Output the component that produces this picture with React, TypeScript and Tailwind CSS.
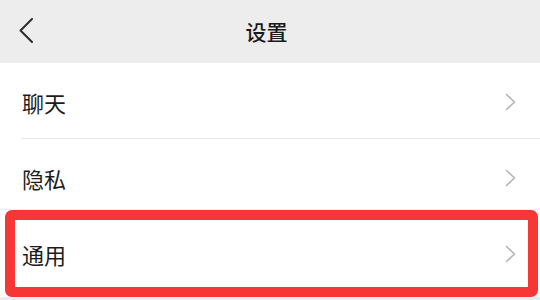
import React from "react";

const Chevron = () => (
  <svg width="11" height="18" viewBox="0 0 11 18" fill="none">
    <polyline points="1.5,1.5 9.5,9 1.5,16.5" stroke="#b5b5b5" strokeWidth="1.6" strokeLinecap="round" strokeLinejoin="round" />
  </svg>
);

const Row = ({ label, h }: { label: string; h: string }) => (
  <div className={`flex items-center justify-between pl-[22px] pr-[24px] bg-white ${h}`}>
    <span className="text-[22px] leading-none text-[#1c1c1c]">{label}</span>
    <Chevron />
  </div>
);

export default function App() {
  return (
    <div
      className="relative w-[540px] h-[300px] overflow-hidden bg-[#ededed]"
      style={{ fontFamily: '"Noto Sans CJK SC", "Noto Sans", sans-serif' }}
    >
      <div className="relative flex items-center justify-center h-[63px] bg-[#ededed]">
        <svg className="absolute left-[19px] top-[18px]" width="15" height="25" viewBox="0 0 15 25" fill="none">
          <polyline points="13,1 1.5,12.5 13,24" stroke="#2e2e2e" strokeWidth="2" strokeLinecap="round" strokeLinejoin="round" />
        </svg>
        <span className="text-[21px] font-medium text-[#1a1a1a] leading-none mr-[7px]">设置</span>
      </div>
      <div className="bg-white">
        <Row label="聊天" h="h-[75px] pt-[3px]" />
        <div className="h-px bg-[#e8e8e8] ml-[21px]" />
        <Row label="隐私" h="h-[70px] pt-[8px]" />
        <div className="h-px bg-[#eeeeee]" />
        <Row label="通用" h="h-[87px]" />
      </div>
      <div className="absolute left-[5px] top-[210px] w-[533px] h-[87px] border-[10px] border-[#f73636] rounded-[7px] pointer-events-none" />
    </div>
  );
}
